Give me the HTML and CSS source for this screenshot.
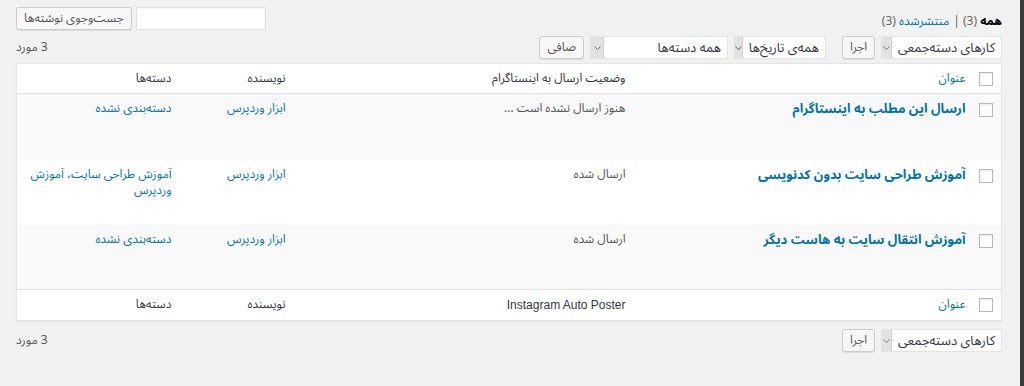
FILE: index.html
```html
<!DOCTYPE html>
<html lang="fa" dir="rtl">
<head>
<meta charset="utf-8" />
<title>نوشته‌ها</title>
<link rel="stylesheet" href="styles.css">
</head>
<body>
<div class="edge"></div>
<div class="wrap">
	<div class="top">
		<ul class="subsubsub">
			<li><b>همه</b> <span class="count">(3)</span> |</li>
			<li><a href="#">منتشرشده</a> <span class="count">(3)</span></li>
		</ul>
		<p class="search-box">
			<input type="search" class="search-input">
			<button class="button">جست‌وجوی نوشته‌ها</button>
		</p>
	</div>

	<div class="tablenav">
		<div class="actions">
			<div class="select bulk"><span>کارهای دسته‌جمعی</span><i class="arrow"></i></div>
			<button class="button go">اجرا</button>
		</div>
		<div class="actions filters">
			<div class="select dates"><span>همه‌ی تاریخ‌ها</span><i class="arrow"></i></div>
			<div class="select cats"><span>همه دسته‌ها</span><i class="arrow"></i></div>
			<button class="button">صافی</button>
		</div>
		<div class="num">3 مورد</div>
	</div>

	<table class="posts">
		<colgroup>
			<col class="c-check"><col class="c-title"><col class="c-status"><col class="c-author"><col class="c-cats">
		</colgroup>
		<thead>
			<tr>
				<th class="check"><input type="checkbox"></th>
				<th><a href="#">عنوان</a></th>
				<th>وضعیت ارسال به اینستاگرام</th>
				<th>نویسنده</th>
				<th>دسته‌ها</th>
			</tr>
		</thead>
		<tbody>
			<tr class="alt">
				<td class="check"><input type="checkbox"></td>
				<td><a href="#" class="row-title">ارسال این مطلب به اینستاگرام</a></td>
				<td class="status">هنوز ارسال نشده است ...</td>
				<td><a href="#">ابزار وردپرس</a></td>
				<td><a href="#">دسته‌بندی نشده</a></td>
			</tr>
			<tr>
				<td class="check"><input type="checkbox"></td>
				<td><a href="#" class="row-title">آموزش طراحی سایت بدون کدنویسی</a></td>
				<td class="status">ارسال شده</td>
				<td><a href="#">ابزار وردپرس</a></td>
				<td><a href="#">آموزش طراحی سایت، آموزش وردپرس</a></td>
			</tr>
			<tr class="alt">
				<td class="check"><input type="checkbox"></td>
				<td><a href="#" class="row-title">آموزش انتقال سایت به هاست دیگر</a></td>
				<td class="status">ارسال شده</td>
				<td><a href="#">ابزار وردپرس</a></td>
				<td><a href="#">دسته‌بندی نشده</a></td>
			</tr>
		</tbody>
		<tfoot>
			<tr>
				<th class="check"><input type="checkbox"></th>
				<th><a href="#">عنوان</a></th>
				<th class="latin">Instagram Auto Poster</th>
				<th>نویسنده</th>
				<th>دسته‌ها</th>
			</tr>
		</tfoot>
	</table>

	<div class="tablenav bottom">
		<div class="actions">
			<div class="select bulk"><span>کارهای دسته‌جمعی</span><i class="arrow"></i></div>
			<button class="button go">اجرا</button>
		</div>
		<div class="num">3 مورد</div>
	</div>
</div>
</body>
</html>
```

FILE: styles.css
```css
*{box-sizing:border-box;}
html, body{margin:0; padding:0; height:100%;}
body{display:flex; background:#f1f1f1; color:#444; font-family:"Noto Sans Arabic", "DejaVu Sans", sans-serif; font-size:12px; line-height:16px;}
a{color:#0073aa; text-decoration:none;}
.edge{width:4px; flex:none; background:#3c3c3c;}
.wrap{flex:1; padding:0 18px 0 16px;}

.top{display:flex; justify-content:space-between; align-items:flex-start; height:36px;}
.subsubsub{list-style:none; margin:14px 0 0 2px; padding:0; display:flex; gap:4px; font-size:12px; line-height:16px; color:#666;}
.subsubsub b{color:#000;}
.search-box{margin:7px 0 0 0; display:flex; gap:4px;}
.search-input{width:130px; height:23px; border:1px solid #e0e0e0; background:#fff; margin:0; padding:0 4px; box-shadow:inset 0 1px 2px rgba(0,0,0,.05);}

.button{height:23px; margin:0; padding:0 7px; border:1px solid #ccc; border-radius:3px; background:#f7f7f7; box-shadow:0 1px 0 #ddd; color:#555; font-family:inherit; font-size:12px; line-height:20px;}

.tablenav{display:flex; align-items:flex-start; height:24px;}
.tablenav.bottom{margin-top:8px; height:23px;}
.actions{display:flex; gap:6px; align-items:center;}
.filters{margin-right:16px;}
.num{margin-right:auto; color:#555; margin-top:4px;}
.select{height:23px; display:flex; align-items:center; background:#fff; border:1px solid #e4e4e4; color:#32373c; font-size:13px;}
.select span{flex:1; padding:0 6px; white-space:nowrap;}
.select .arrow{width:13px; height:100%; background:#e2e2e2 url("data:image/svg+xml,%3Csvg xmlns='http://www.w3.org/2000/svg' width='7' height='4'%3E%3Cpath d='M.5.5 3.5 3.5 6.5.5' fill='none' stroke='%23777'/%3E%3C/svg%3E") no-repeat center; border-right:1px solid #d0d0d0;}
.bulk{width:121px;}
.dates{width:92px;}
.cats{width:138px;}
.go{width:33px; padding:0;}

.posts{width:100%; table-layout:fixed; border-collapse:collapse; margin-top:3px; background:#fff; border:1px solid #e5e5e5; box-shadow:0 1px 1px rgba(0,0,0,.04);}
.c-check{width:28px;} .c-title{width:340px;} .c-status{width:340px;} .c-author{width:114px;}
.posts th, .posts td{text-align:right; vertical-align:top; padding:7px 8px; line-height:16px;}
.posts th{font-weight:normal; color:#32373c; height:30px; padding:7px 8px 6px; font-size:12px;}
.posts thead th{border-bottom:1px solid #e1e1e1;}
.posts tfoot th{border-top:1px solid #e1e1e1; height:31px;}
.posts th.latin{font-family:"Liberation Sans", sans-serif; font-size:12px;}
.posts td{height:65px;}
.posts tbody tr:first-child td{height:66px;}
.posts tr.alt td{background:#f9f9f9;}
.posts .check{padding:8px 8px 0 6px;}
.posts td.check{padding-top:9px;}
.status{color:#555;}
.row-title{font-weight:bold; font-size:13px;}
input[type="checkbox"]{appearance:none; display:block; width:14px; height:14px; margin:0; border:1px solid #b4b9be; background:#fff; box-shadow:inset 0 1px 2px rgba(0,0,0,.1);}
```
